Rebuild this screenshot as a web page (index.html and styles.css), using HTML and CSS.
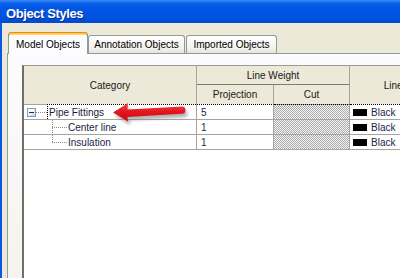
FILE: index.html
```html
<!DOCTYPE html>
<html lang="en">
<head>
  <meta charset="UTF-8" />
  <title>Object Styles</title>
  <link rel="stylesheet" href="styles.css">
</head>
<body>

  <div class="window">
    <div class="titlebar">Object Styles</div>

    <div class="frame">
      <div class="tabs">
        <div class="tab active">Model Objects</div>
        <div class="tab">Annotation Objects</div>
        <div class="tab imported">Imported Objects</div>
      </div>

      <div class="panel">
        <div class="grid">
          <table class="styles-table">
            <colgroup>
              <col class="col-category">
              <col class="col-weight">
              <col class="col-weight-cut">
              <col class="col-color">
            </colgroup>
            <thead>
              <tr class="head-top">
                <th rowspan="2">Category</th>
                <th colspan="2" class="group">Line Weight</th>
                <th rowspan="2">Line Color</th>
              </tr>
              <tr class="head-sub">
                <th>Projection</th>
                <th>Cut</th>
              </tr>
            </thead>
            <tbody>
              <tr class="row focused">
                <td class="category">
                  <div class="tree">
                    <span class="expander"></span>
                    <span class="stub"></span>
                    <span class="node-label">Pipe Fittings</span>
                  </div>
                </td>
                <td class="num">5</td>
                <td class="hatched"></td>
                <td class="color"><span class="swatch"></span>Black</td>
              </tr>
              <tr class="row">
                <td class="category">
                  <div class="tree child">
                    <span class="branch"></span>
                    <span>Center line</span>
                  </div>
                </td>
                <td class="num">1</td>
                <td class="hatched"></td>
                <td class="color"><span class="swatch"></span>Black</td>
              </tr>
              <tr class="row">
                <td class="category">
                  <div class="tree child">
                    <span class="branch last"></span>
                    <span>Insulation</span>
                  </div>
                </td>
                <td class="num">1</td>
                <td class="hatched"></td>
                <td class="color"><span class="swatch"></span>Black</td>
              </tr>
            </tbody>
          </table>

          <!-- red callout arrow drawn over the grid -->
          <svg class="callout" width="90" height="30" viewBox="100 98 90 30">
            <defs>
              <filter id="soft" x="-20%" y="-50%" width="140%" height="200%">
                <feGaussianBlur stdDeviation="1.4"/>
              </filter>
              <linearGradient id="red" x1="0" y1="0" x2="0" y2="1">
                <stop offset="0" stop-color="#f54b4f"/>
                <stop offset="0.45" stop-color="#e4161e"/>
                <stop offset="1" stop-color="#c80c14"/>
              </linearGradient>
            </defs>
            <path d="M113 112.5 L128 103 L127.5 109.5 L182 106.5 Q185.5 106.5 185.5 110 Q185.5 113.5 182 113.8 L127.5 117 L128 121.5 Z"
                  fill="#777" opacity="0.55" filter="url(#soft)" transform="translate(2 3.5)"/>
            <path d="M113 112.5 L128 103 L127.5 109.5 L182 106.5 Q185.5 106.5 185.5 110 Q185.5 113.5 182 113.8 L127.5 117 L128 121.5 Z"
                  fill="url(#red)"/>
          </svg>
        </div>
      </div>
    </div>
  </div>

</body>
</html>
```

FILE: styles.css
```css
:root {
  --xp-blue: #0857e8;
  --dialog-bg: #ece9d8;
  --tab-border: #919b9c;
  --grid-line: #a6a49c;
  --font-ui: 'Liberation Sans', Arial, sans-serif;
}

* {
  box-sizing: border-box;
  margin: 0;
  padding: 0;
}

html, body {
  width: 400px;
  height: 278px;
  overflow: hidden;
}

body {
  font-family: var(--font-ui);
  font-size: 10px;
  background-color: var(--dialog-bg);
}

.window {
  display: flex;
  flex-direction: column;
  width: 400px;
  height: 278px;
}

.titlebar {
  height: 23px;
  padding: 5px 0 0 6px;
  line-height: 18px;
  font-size: 13px;
  font-weight: bold;
  letter-spacing: -0.4px;
  color: #fff;
  text-shadow: 1px 1px 0 #0a2a9a;
  background: linear-gradient(to bottom, #3c8ef8 0, #0d62ea 3px, #0057e6 8px, #0053df 18px, #0049d0 22px, #0a50d8 23px);
}

.frame {
  flex: 1;
  display: flex;
  flex-direction: column;
  min-height: 0;
  padding: 9px 0 0 5px;
  border-left: 2px solid var(--xp-blue);
}

.tabs {
  display: flex;
  align-items: flex-end;
  margin-left: 1px;
}

.tab {
  height: 18px;
  padding: 2px 0;
  line-height: 13px;
  text-align: center;
  color: #000;
  border: 1px solid var(--tab-border);
  border-bottom: none;
  border-radius: 3px 3px 0 0;
  background: linear-gradient(to bottom, #ffffff, #f3f2ec 70%, #e6e4dc);
}

.tab:nth-child(1) { width: 80px; }
.tab:nth-child(2) { width: 97px; }
.tab.imported { width: 91px; margin-left: 1px; }

.tab.active {
  position: relative;
  z-index: 1;
  height: 22px;
  padding: 5px 0 3px;
  margin-bottom: -1px;
  border-top: 1px solid #e68b2c;
  background: #fcfcfe;
  box-shadow: inset 0 1px 0 #ffc73c, inset 0 2px 0 #ffd96b;
}

.panel {
  flex: 1;
  display: flex;
  flex-direction: column;
  min-height: 0;
  padding: 11px 0 0 14px;
  border: 1px solid var(--tab-border);
  border-right: none;
  border-bottom: none;
  background: linear-gradient(to bottom, #fcfcfe, #f4f3ee);
}

.grid {
  position: relative;
  flex: 1;
  overflow: hidden;
  background: #fff;
  border-top: 1px solid #9c9a94;
  border-left: 2px solid #6f6e69;
}

.styles-table {
  width: 440px;
  table-layout: fixed;
  border-collapse: separate;
  border-spacing: 0;
  font-size: 10px;
}

.col-category { width: 173px; }
.col-weight { width: 77px; }
.col-weight-cut { width: 76px; }
.col-color { width: 114px; }

.styles-table th {
  font-weight: normal;
  color: #1a1a1a;
  background: var(--dialog-bg);
  border-right: 1px solid var(--grid-line);
  text-align: center;
  vertical-align: middle;
}

.head-top th { height: 19px; }
.head-top th.group { border-bottom: 1px solid #7d7b74; }
.head-sub th { height: 19px; }

.styles-table td {
  height: 15px;
  padding: 0;
  color: #1c2447;
  white-space: nowrap;
  border-right: 1px solid var(--grid-line);
  border-bottom: 1px solid var(--grid-line);
  vertical-align: middle;
}

.row.focused td {
  height: 16px;
  border-top: 1px dotted #000;
}

.row.focused td.category {
  border-top: 1px solid var(--grid-line);
}

.tree {
  display: flex;
  align-items: center;
  height: 14px;
  padding-left: 3px;
}

.expander {
  position: relative;
  width: 9px;
  height: 9px;
  border: 1px solid #7f9db9;
  background: linear-gradient(135deg, #ffffff 30%, #c4d0dc);
}

.expander::after {
  content: '';
  position: absolute;
  left: 1px;
  top: 3px;
  width: 5px;
  height: 1px;
  background: #1b2a58;
}

.stub {
  width: 11px;
  height: 1px;
  background: repeating-linear-gradient(to right, #8c8c8c 0 1px, transparent 1px 2px);
}

.node-label {
  flex: 1;
  align-self: stretch;
  margin-top: -1px;
  padding: 1px 0 0 1px;
  line-height: 13px;
  color: #161c3c;
  background: #fff;
  border-top: 1px dotted #000;
  border-left: 1px dotted #000;
}

.tree.child {
  padding-left: 28px;
  height: 14px;
}

.branch {
  align-self: stretch;
  width: 16px;
  background:
    repeating-linear-gradient(to bottom, #8c8c8c 0 1px, transparent 1px 2px) 0 0 / 1px 100% no-repeat,
    repeating-linear-gradient(to right, #8c8c8c 0 1px, transparent 1px 2px) 0 7px / 100% 1px no-repeat;
}

.branch.last {
  background:
    repeating-linear-gradient(to bottom, #8c8c8c 0 1px, transparent 1px 2px) 0 0 / 1px 7px no-repeat,
    repeating-linear-gradient(to right, #8c8c8c 0 1px, transparent 1px 2px) 0 7px / 100% 1px no-repeat;
}

.num {
  padding-left: 4px !important;
}

.hatched {
  background: repeating-conic-gradient(#acacac 0 25%, #f4f4f4 0 50%) 0 0 / 2px 2px;
}

.color {
  padding-left: 3px !important;
}

.swatch {
  display: inline-block;
  width: 14px;
  height: 7px;
  margin-right: 4px;
  vertical-align: 0;
  background: #000;
}

.callout {
  position: absolute;
  left: 76px;
  top: 32px;
}
```
